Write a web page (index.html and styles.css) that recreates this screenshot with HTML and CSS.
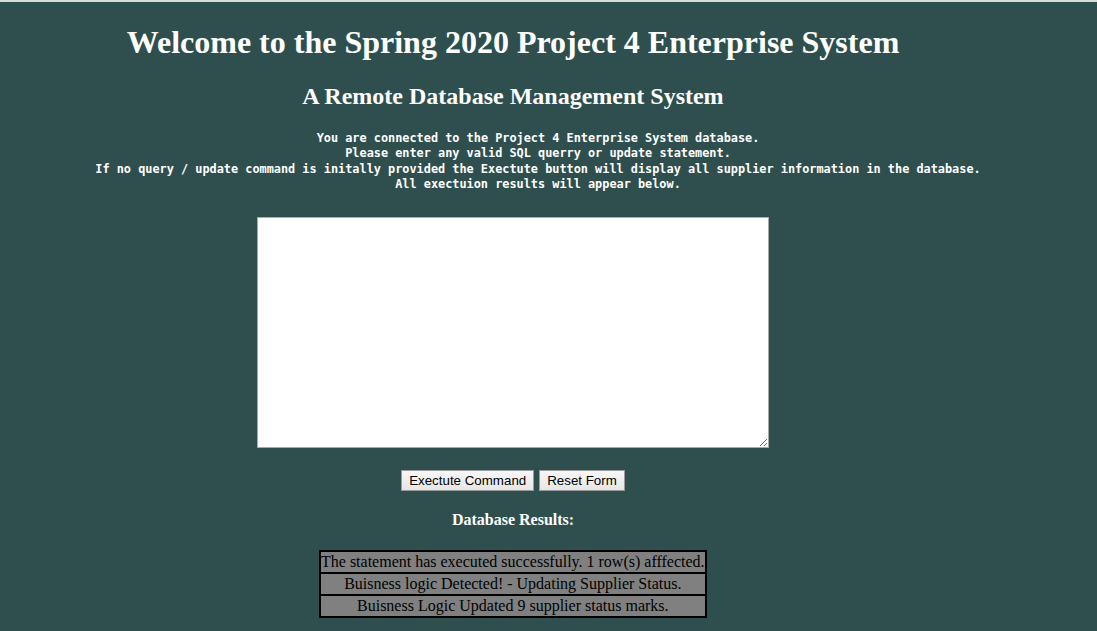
FILE: index.html
```html
<!DOCTYPE html>
<html>
<head>
<meta charset="utf-8">
<title>Project 4 Enterprise System</title>
<link rel="stylesheet" href="styles.css">
</head>
<body>
<div class="topline"></div>
<div class="page">
  <h1 class="title">Welcome to the Spring 2020 Project 4 Enterprise System</h1>
  <h2 class="subtitle">A Remote Database Management System</h2>
  <div class="info">
    <div>You are connected to the Project 4 Enterprise System database.</div>
    <div>Please enter any valid SQL querry or update statement.</div>
    <div>If no query / update command is initally provided the Exectute button will display all supplier information in the database.</div>
    <div>All exectuion results will appear below.</div>
  </div>
  <form class="form">
    <textarea class="sql"></textarea>
    <div class="buttons">
      <button type="button" class="btn">Exectute Command</button>
      <button type="reset" class="btn">Reset Form</button>
    </div>
  </form>
  <div class="results-title">Database Results:</div>
  <table class="results">
    <tr><td>The statement has executed successfully. 1 row(s) afffected.</td></tr>
    <tr><td>Buisness logic Detected! - Updating Supplier Status.</td></tr>
    <tr><td>Buisness Logic Updated 9 supplier status marks.</td></tr>
  </table>
</div>
</body>
</html>
```

FILE: styles.css
```css
html, body {
  margin: 0;
  padding: 0;
  background: #2f4f4f;
  height: 100%;
  overflow: hidden;
}
.topline {
  height: 2px;
  background: #dadada;
}
.page {
  color: #ffffff;
  font-family: "Liberation Serif", "Times New Roman", serif;
}
.title {
  width: 1026px;
  margin: 22px 0 0 0;
  text-align: center;
  font-size: 32px;
  font-weight: bold;
}
.subtitle {
  width: 1026px;
  margin: 22px 0 0 0;
  text-align: center;
  font-size: 24px;
  font-weight: bold;
}
.info {
  width: 1076px;
  margin: 21px 0 0 0;
  text-align: center;
  font-family: "DejaVu Sans Mono", "Liberation Mono", monospace;
  font-size: 11.86px;
  font-weight: bold;
  line-height: 15.3px;
}
.form {
  width: 1026px;
  margin: 25px 0 0 0;
  display: flex;
  flex-direction: column;
  align-items: center;
}
.sql {
  width: 512px;
  height: 231px;
  box-sizing: border-box;
  border: 1px solid #a9a9a9;
  background: #ffffff;
  margin: 0;
  padding: 2px;
  resize: both;
}
.buttons {
  display: flex;
  gap: 5px;
  margin-top: 22px;
}
.btn {
  font-family: "Liberation Sans", Arial, sans-serif;
  font-size: 13.33px;
  color: #000;
  height: 21px;
  padding: 0 7px;
  border: 1px solid #9a9a9a;
  border-radius: 0;
  background: linear-gradient(#f7f7f7, #e6e6e6);
}
.results-title {
  width: 1026px;
  margin-top: 20px;
  text-align: center;
  font-weight: bold;
  font-size: 16px;
}
.results {
  margin: 21px 0 0 319px;
  border-collapse: collapse;
  border: 2px solid #000;
  background: #808080;
  color: #000;
  font-size: 16px;
}
.results td {
  border: 2px solid #000;
  text-align: center;
  padding: 0;
  height: 20px;
  line-height: 20px;
}
```
